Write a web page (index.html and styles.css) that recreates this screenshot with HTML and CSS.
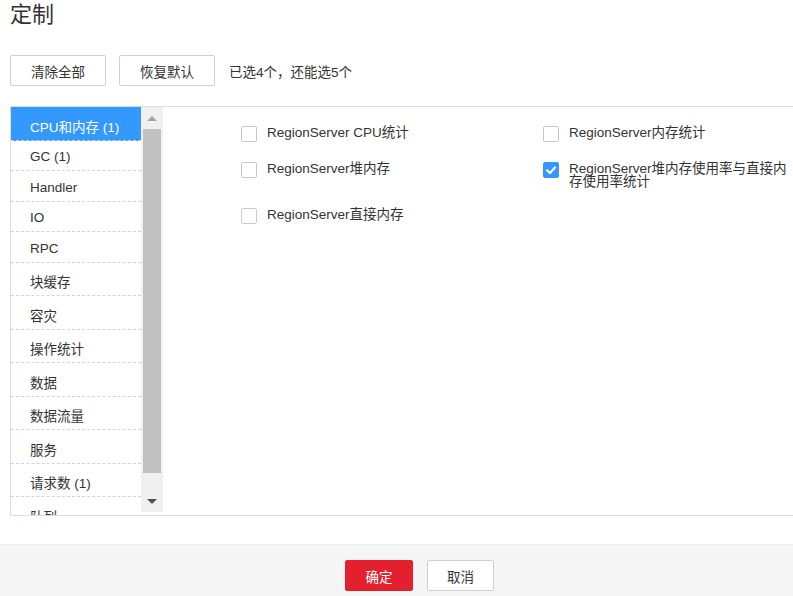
FILE: index.html
```html
<!DOCTYPE html>
<html lang="zh">
<head>
<meta charset="utf-8">
<title>定制</title>
<link rel="stylesheet" href="styles.css">
</head>
<body>
<div class="dialog">
  <div class="content">
    <h1 class="title">定制</h1>
    <div class="toolbar">
      <button class="btn">清除全部</button>
      <button class="btn">恢复默认</button>
      <span class="count">已选4个，还能选5个</span>
    </div>
    <div class="panel">
      <div class="menu-wrap">
        <ul class="menu">
          <li class="menu-item active">CPU和内存 (1)</li>
          <li class="menu-item">GC (1)</li>
          <li class="menu-item">Handler</li>
          <li class="menu-item">IO</li>
          <li class="menu-item">RPC</li>
          <li class="menu-item">块缓存</li>
          <li class="menu-item">容灾</li>
          <li class="menu-item">操作统计</li>
          <li class="menu-item">数据</li>
          <li class="menu-item">数据流量</li>
          <li class="menu-item">服务</li>
          <li class="menu-item">请求数 (1)</li>
          <li class="menu-item">队列</li>
        </ul>
      </div>
      <div class="scrollbar">
        <div class="sb-btn"><span class="arrow-up"></span></div>
        <div class="sb-thumb"></div>
        <div class="sb-space"></div>
        <div class="sb-btn"><span class="arrow-down"></span></div>
      </div>
      <div class="options">
        <label class="opt"><span class="box"></span><span class="opt-text">RegionServer CPU统计</span></label>
        <label class="opt"><span class="box"></span><span class="opt-text">RegionServer内存统计</span></label>
        <label class="opt"><span class="box"></span><span class="opt-text">RegionServer堆内存</span></label>
        <label class="opt"><span class="box checked"><svg width="16" height="16" viewBox="0 0 16 16"><polyline points="4,8.2 7,11 12,5.5" fill="none" stroke="#fff" stroke-width="2.2" stroke-linecap="round" stroke-linejoin="round"/></svg></span><span class="opt-text">RegionServer堆内存使用率与直接内存使用率统计</span></label>
        <label class="opt"><span class="box"></span><span class="opt-text">RegionServer直接内存</span></label>
      </div>
    </div>
  </div>
  <div class="footer">
    <button class="btn btn-primary">确定</button>
    <button class="btn btn-cancel">取消</button>
  </div>
</div>
</body>
</html>
```
FILE: styles.css
```css
html, body {
  margin: 0;
  padding: 0;
  overflow: hidden;
  background: #fff;
}
body {
  font-family: "Liberation Sans", "Noto Sans CJK SC", sans-serif;
  font-size: 13.5px;
  color: #333;
}
.dialog {
  width: 839px;
}
.content {
  padding: 0 10px;
}
.title {
  margin: 0;
  font-size: 22px;
  font-weight: normal;
  line-height: 30px;
  color: #333;
}
.toolbar {
  margin-top: 25px;
  display: flex;
  align-items: center;
  height: 31px;
}
.btn {
  font-family: inherit;
  font-size: 13.5px;
  color: #333;
  background: #fff;
  border: 1px solid #cfcfcf;
  border-radius: 2px;
  height: 31px;
  width: 96px;
  padding: 0;
  margin: 0 13px 0 0;
}
.count {
  margin-left: 1px;
}
.panel {
  margin-top: 20px;
  border: 1px solid #dcdcdc;
  height: 408px;
  display: flex;
}
.menu-wrap {
  width: 130px;
  height: 408px;
  overflow: hidden;
}
.menu {
  list-style: none;
  margin: 0;
  padding: 0;
}
.menu-item {
  min-height: 17px;
  padding: 8.5px 0 4px 19px;
  border-bottom: 1px dashed #d3d3d3;
  white-space: nowrap;
}
.menu-item.active {
  background: #3399ff;
  color: #fff;
}
.scrollbar {
  width: 22px;
  height: 405px;
  background: #f0f0f0;
  display: flex;
  flex-direction: column;
}
.sb-btn {
  height: 22px;
  display: flex;
  align-items: center;
  justify-content: center;
}
.arrow-up {
  width: 0;
  height: 0;
  border-left: 5px solid transparent;
  border-right: 5px solid transparent;
  border-bottom: 5px solid #a3a3a3;
}
.arrow-down {
  width: 0;
  height: 0;
  border-left: 5px solid transparent;
  border-right: 5px solid transparent;
  border-top: 5px solid #505050;
}
.sb-thumb {
  height: 344px;
  margin: 0 2px;
  background: #c1c1c1;
}
.sb-space {
  flex: 1;
}
.options {
  flex: 1;
  padding: 19px 0 0 78px;
  display: grid;
  grid-template-columns: 302px 252px;
  row-gap: 20px;
  align-content: start;
  align-items: start;
}
.opt {
  display: flex;
  align-items: flex-start;
  gap: 10px;
}
.box {
  flex: none;
  width: 16px;
  height: 16px;
  box-sizing: border-box;
  border: 1px solid #c9c9c9;
  border-radius: 2px;
  background: #fff;
}
.box.checked {
  background: #3399ff;
  border-color: #3399ff;
  display: flex;
  align-items: center;
  justify-content: center;
}
.box.checked svg {
  display: block;
  flex: none;
}
.opt-text {
  line-height: 13px;
  color: #333;
}
.footer {
  margin-top: 28px;
  background: #f5f5f5;
  border-top: 1px solid #ececec;
  padding: 15px 0 16px;
  display: flex;
  justify-content: center;
  gap: 14px;
}
.footer .btn {
  margin: 0;
}
.btn-primary {
  width: 68px;
  background: #e4202e;
  border-color: #e4202e;
  color: #fff;
}
.btn-cancel {
  width: 67px;
}
```
